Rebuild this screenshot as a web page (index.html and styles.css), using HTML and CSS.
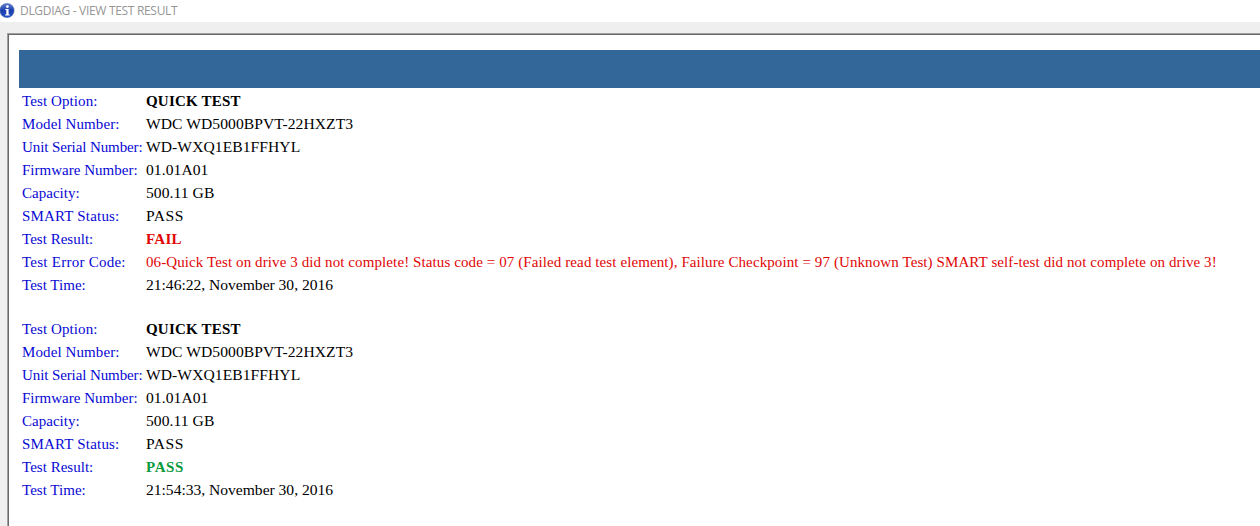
FILE: index.html
```
<!DOCTYPE html>
<html lang="en">

<head>
    <meta charset="UTF-8">
    <title>DLGDIAG - VIEW TEST RESULT</title>
    <link rel="stylesheet" href="styles.css">
</head>

<body>
    <div class="titlebar">
        <svg class="icon" width="16" height="16" viewBox="0 0 16 16">
            <defs>
                <linearGradient id="ball" x1="0" y1="0" x2="0" y2="1">
                    <stop offset="0" stop-color="#5c7cd0"/>
                    <stop offset="0.5" stop-color="#1b3fae"/>
                    <stop offset="1" stop-color="#2450c8"/>
                </linearGradient>
            </defs>
            <circle cx="7" cy="7.5" r="7.6" fill="#8c9cc0"/>
            <circle cx="7" cy="7.5" r="6.9" fill="url(#ball)"/>
            <circle cx="7.4" cy="3.6" r="1.4" fill="#fff"/>
            <path d="M5.3 6h3.3v5.5h1.1v1.1H5.1v-1.1h1.2V7.1h-1z" fill="#fff"/>
        </svg>
        <span class="title">DLGDIAG - VIEW TEST RESULT</span>
    </div>
    <div class="window">
        <div class="view">
            <div class="banner"></div>
            <table class="result">
                <tr><td class="label">Test Option:</td><td class="option"><b>QUICK TEST</b></td></tr>
                <tr><td class="label">Model Number:</td><td class="code">WDC WD5000BPVT-22HXZT3</td></tr>
                <tr><td class="label serial">Unit Serial Number:</td><td class="code">WD-WXQ1EB1FFHYL</td></tr>
                <tr><td class="label firmware">Firmware Number:</td><td class="code">01.01A01</td></tr>
                <tr><td class="label firmware">Capacity:</td><td class="code">500.11 GB</td></tr>
                <tr><td class="label smart">SMART Status:</td><td class="status">PASS</td></tr>
                <tr><td class="label firmware">Test Result:</td><td class="fail"><b>FAIL</b></td></tr>
                <tr><td class="label errcode">Test Error Code:</td><td class="fail error">06-Quick Test on drive 3 did not complete! Status code = 07 (Failed read test element), Failure Checkpoint = 97 (Unknown Test) SMART self-test did not complete on drive 3!</td></tr>
                <tr><td class="label firmware">Test Time:</td><td class="time">21:46:22, November 30, 2016</td></tr>
            </table>
            <table class="result">
                <tr><td class="label">Test Option:</td><td class="option"><b>QUICK TEST</b></td></tr>
                <tr><td class="label">Model Number:</td><td class="code">WDC WD5000BPVT-22HXZT3</td></tr>
                <tr><td class="label serial">Unit Serial Number:</td><td class="code">WD-WXQ1EB1FFHYL</td></tr>
                <tr><td class="label firmware">Firmware Number:</td><td class="code">01.01A01</td></tr>
                <tr><td class="label firmware">Capacity:</td><td class="code">500.11 GB</td></tr>
                <tr><td class="label smart">SMART Status:</td><td class="status">PASS</td></tr>
                <tr><td class="label firmware">Test Result:</td><td class="pass"><b>PASS</b></td></tr>
                <tr><td class="label firmware">Test Time:</td><td class="time">21:54:33, November 30, 2016</td></tr>
            </table>
        </div>
    </div>
</body>
</html>
```

FILE: styles.css
```
body {
    margin: 0;
    height: 526px;
    overflow: hidden;
    display: flex;
    flex-direction: column;
    background-color: #ffffff;
}
.titlebar {
    display: flex;
    align-items: center;
    height: 22px;
    gap: 4px;
    padding-bottom: 1px;
    box-sizing: border-box;
}
.icon {
    overflow: visible;
}
.title {
    font-family: "Open Sans", "Noto Sans", sans-serif;
    font-size: 12px;
    letter-spacing: -0.31px;
    color: #969696;
}
.window {
    flex: 1;
    display: flex;
    padding: 11px 0 0 7px;
    background-color: #efefef;
}
.view {
    flex: 1;
    border-top: 1px solid #a0a0a0;
    border-left: 1px solid #a0a0a0;
    box-shadow: inset 1px 1px 0 #696969;
    padding: 16px 0 0 11px;
    background-color: #ffffff;
}
.banner {
    height: 38px;
    margin-bottom: 2px;
    background-color: #336799;
}
.result {
    border-collapse: collapse;
    margin-left: 3px;
    margin-bottom: 21px;
    font-family: "Liberation Serif", "Times New Roman", serif;
    font-size: 15px;
    color: #000000;
}
.result td {
    height: 23px;
    padding: 0;
    line-height: 23px;
    vertical-align: top;
    white-space: nowrap;
}
.result .label {
    width: 124px;
    min-width: 124px;
    max-width: 124px;
    letter-spacing: 0.1px;
    color: #0808d4;
}
.result .serial {
    letter-spacing: -0.1px;
}
.result .firmware {
    letter-spacing: 0.02px;
}
.result .smart {
    letter-spacing: 0.18px;
}
.result .errcode {
    letter-spacing: 0.25px;
}
.result .code, .result .status, .result .time {
    font-size: 15.6px;
    line-height: 21px;
}
.option {
    letter-spacing: 0.2px;
}
.code {
    letter-spacing: 0.06px;
}
.status {
    letter-spacing: 0.5px;
}
.time {
    letter-spacing: -0.02px;
}
.fail {
    letter-spacing: 0.3px;
    color: #e00606;
}
.error {
    letter-spacing: 0.1px;
}
.pass {
    letter-spacing: 0.6px;
    color: #0a9a3c;
}
```
